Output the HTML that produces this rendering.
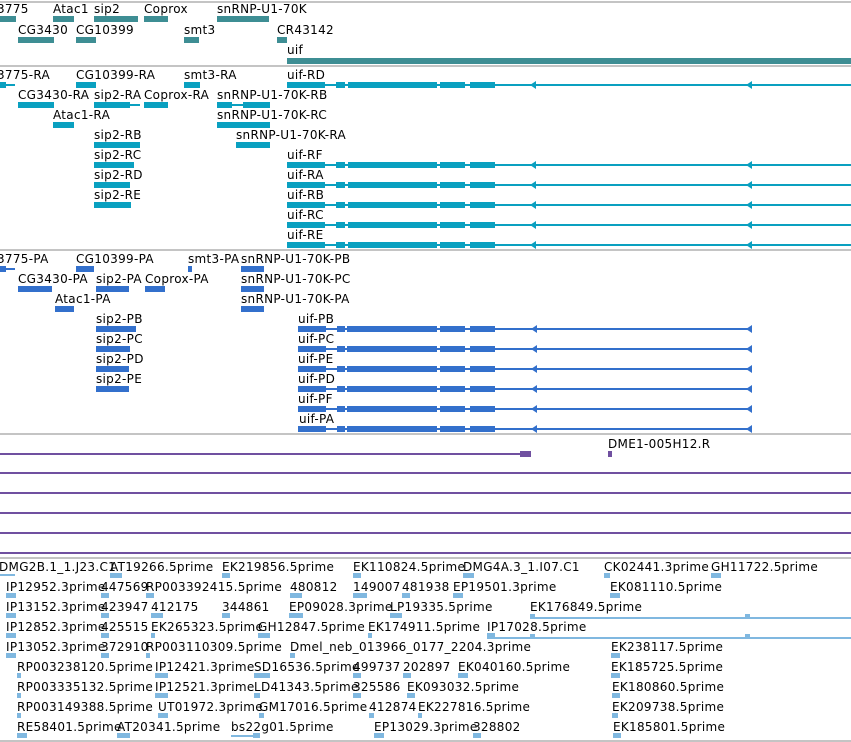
<!DOCTYPE html>
<html><head><meta charset="utf-8"><style>
body{margin:0;width:851px;height:742px;overflow:hidden;background:#fff;position:relative;font-family:"DejaVu Sans","Liberation Sans",sans-serif;font-size:12px;color:#000}
.t{position:absolute;white-space:nowrap;line-height:14px;margin-top:1px;letter-spacing:0.3px}
.b{position:absolute;height:6px}
.g{background:#3e8e94}.r{background:#0aa0c0}.p{background:#3370cc}.e{background:#80b8e0}.v{background:#7050a0}
.l{position:absolute;height:2px}
.s{position:absolute;left:0;width:851px;height:2px;background:#c4c4c4}
.row{position:absolute;left:0;width:851px;height:6px}
.row>div{position:absolute;top:0;height:6px}
.row>.ln{top:2px;height:2px}
.row>.ah{width:0;height:0;top:-1px;border-top:4px solid transparent;border-bottom:4px solid transparent;border-right:6px solid;background:none!important}
.R>div{background:#0aa0c0}.R>.ah{border-right-color:#0aa0c0}
.P>div{background:#3370cc}.P>.ah{border-right-color:#3370cc}
</style></head><body>
<div class="s" style="top:1px"></div>
<div class="s" style="top:65px"></div>
<div class="s" style="top:249px"></div>
<div class="s" style="top:433px"></div>
<div class="s" style="top:557px"></div>
<div class="s" style="top:740px"></div>

<!-- genes -->
<div class="t" style="left:-3px;top:1px">3775</div><div class="t" style="left:53px;top:1px">Atac1</div><div class="t" style="left:94px;top:1px">sip2</div><div class="t" style="left:144px;top:1px">Coprox</div><div class="t" style="left:217px;top:1px">snRNP-U1-70K</div>
<div class="b g" style="left:0;top:16px;width:16px"></div><div class="b g" style="left:53px;top:16px;width:21px"></div><div class="b g" style="left:94px;top:16px;width:44px"></div><div class="b g" style="left:144px;top:16px;width:24px"></div><div class="b g" style="left:217px;top:16px;width:52px"></div>
<div class="t" style="left:18px;top:22px">CG3430</div><div class="t" style="left:76px;top:22px">CG10399</div><div class="t" style="left:184px;top:22px">smt3</div><div class="t" style="left:277px;top:22px">CR43142</div>
<div class="b g" style="left:18px;top:37px;width:36px"></div><div class="b g" style="left:76px;top:37px;width:20px"></div><div class="b g" style="left:184px;top:37px;width:15px"></div><div class="b g" style="left:277px;top:37px;width:10px"></div>
<div class="t" style="left:287px;top:42px">uif</div>
<div class="b g" style="left:287px;top:58px;width:564px"></div>

<!-- transcripts -->
<div class="t" style="left:-3px;top:67px">3775-RA</div><div class="t" style="left:76px;top:67px">CG10399-RA</div><div class="t" style="left:184px;top:67px">smt3-RA</div><div class="t" style="left:287px;top:67px">uif-RD</div>
<div class="b r" style="left:0;top:82px;width:6px"></div><div class="l r" style="left:0;top:84px;width:15px"></div><div class="b r" style="left:76px;top:82px;width:20px"></div><div class="b r" style="left:184px;top:82px;width:16px"></div>
<div class="t" style="left:18px;top:87px">CG3430-RA</div><div class="t" style="left:94px;top:87px">sip2-RA</div><div class="t" style="left:144px;top:87px">Coprox-RA</div><div class="t" style="left:217px;top:87px">snRNP-U1-70K-RB</div>
<div class="b r" style="left:18px;top:102px;width:36px"></div><div class="b r" style="left:94px;top:102px;width:36px"></div><div class="l r" style="left:94px;top:104px;width:46px"></div><div class="b r" style="left:144px;top:102px;width:24px"></div><div class="b r" style="left:217px;top:102px;width:15px"></div><div class="l r" style="left:217px;top:104px;width:50px"></div><div class="b r" style="left:243px;top:102px;width:27px"></div>
<div class="t" style="left:53px;top:107px">Atac1-RA</div><div class="t" style="left:217px;top:107px">snRNP-U1-70K-RC</div>
<div class="b r" style="left:53px;top:122px;width:21px"></div><div class="b r" style="left:217px;top:122px;width:53px"></div>
<div class="t" style="left:94px;top:127px">sip2-RB</div><div class="t" style="left:236px;top:127px">snRNP-U1-70K-RA</div>
<div class="b r" style="left:94px;top:142px;width:46px"></div><div class="b r" style="left:236px;top:142px;width:34px"></div>
<div class="t" style="left:94px;top:147px">sip2-RC</div><div class="t" style="left:287px;top:147px">uif-RF</div>
<div class="b r" style="left:94px;top:162px;width:40px"></div>
<div class="t" style="left:94px;top:167px">sip2-RD</div><div class="t" style="left:287px;top:167px">uif-RA</div>
<div class="b r" style="left:94px;top:182px;width:36px"></div>
<div class="t" style="left:94px;top:187px">sip2-RE</div><div class="t" style="left:287px;top:187px">uif-RB</div>
<div class="b r" style="left:94px;top:202px;width:37px"></div>
<div class="t" style="left:287px;top:207px">uif-RC</div>
<div class="t" style="left:287px;top:227px">uif-RE</div>

<div class="row R" style="top:82px"><div class="ln" style="left:287px;width:564px"></div><div style="left:287px;width:38px"></div><div style="left:336px;width:9px"></div><div style="left:348px;width:89px"></div><div style="left:440px;width:25px"></div><div style="left:470px;width:25px"></div><div class="ah" style="left:530px"></div><div class="ah" style="left:746px"></div></div>
<div class="row R" style="top:162px"><div class="ln" style="left:287px;width:564px"></div><div style="left:287px;width:38px"></div><div style="left:336px;width:9px"></div><div style="left:348px;width:89px"></div><div style="left:440px;width:25px"></div><div style="left:470px;width:25px"></div><div class="ah" style="left:530px"></div><div class="ah" style="left:746px"></div></div>
<div class="row R" style="top:182px"><div class="ln" style="left:287px;width:564px"></div><div style="left:287px;width:38px"></div><div style="left:336px;width:9px"></div><div style="left:348px;width:89px"></div><div style="left:440px;width:25px"></div><div style="left:470px;width:25px"></div><div class="ah" style="left:530px"></div><div class="ah" style="left:746px"></div></div>
<div class="row R" style="top:202px"><div class="ln" style="left:287px;width:564px"></div><div style="left:287px;width:38px"></div><div style="left:336px;width:9px"></div><div style="left:348px;width:89px"></div><div style="left:440px;width:25px"></div><div style="left:470px;width:25px"></div><div class="ah" style="left:530px"></div><div class="ah" style="left:746px"></div></div>
<div class="row R" style="top:222px"><div class="ln" style="left:287px;width:564px"></div><div style="left:287px;width:38px"></div><div style="left:336px;width:9px"></div><div style="left:348px;width:89px"></div><div style="left:440px;width:25px"></div><div style="left:470px;width:25px"></div><div class="ah" style="left:530px"></div><div class="ah" style="left:746px"></div></div>
<div class="row R" style="top:242px"><div class="ln" style="left:287px;width:564px"></div><div style="left:287px;width:38px"></div><div style="left:336px;width:9px"></div><div style="left:348px;width:89px"></div><div style="left:440px;width:25px"></div><div style="left:470px;width:25px"></div><div class="ah" style="left:530px"></div><div class="ah" style="left:746px"></div></div>

<!-- proteins -->
<div class="t" style="left:-3px;top:251px">3775-PA</div><div class="t" style="left:76px;top:251px">CG10399-PA</div><div class="t" style="left:188px;top:251px">smt3-PA</div><div class="t" style="left:241px;top:251px">snRNP-U1-70K-PB</div>
<div class="b p" style="left:0;top:266px;width:6px"></div><div class="l p" style="left:0;top:268px;width:15px"></div><div class="b p" style="left:76px;top:266px;width:18px"></div><div class="b p" style="left:188px;top:266px;width:4px"></div><div class="b p" style="left:241px;top:266px;width:23px"></div>
<div class="t" style="left:18px;top:271px">CG3430-PA</div><div class="t" style="left:96px;top:271px">sip2-PA</div><div class="t" style="left:145px;top:271px">Coprox-PA</div><div class="t" style="left:241px;top:271px">snRNP-U1-70K-PC</div>
<div class="b p" style="left:18px;top:286px;width:34px"></div><div class="b p" style="left:96px;top:286px;width:33px"></div><div class="b p" style="left:145px;top:286px;width:20px"></div><div class="b p" style="left:241px;top:286px;width:23px"></div>
<div class="t" style="left:55px;top:291px">Atac1-PA</div><div class="t" style="left:241px;top:291px">snRNP-U1-70K-PA</div>
<div class="b p" style="left:55px;top:306px;width:19px"></div><div class="b p" style="left:241px;top:306px;width:23px"></div>
<div class="t" style="left:96px;top:311px">sip2-PB</div><div class="t" style="left:298px;top:311px">uif-PB</div>
<div class="b p" style="left:96px;top:326px;width:40px"></div>
<div class="t" style="left:96px;top:331px">sip2-PC</div><div class="t" style="left:298px;top:331px">uif-PC</div>
<div class="b p" style="left:96px;top:346px;width:34px"></div>
<div class="t" style="left:96px;top:351px">sip2-PD</div><div class="t" style="left:298px;top:351px">uif-PE</div>
<div class="b p" style="left:96px;top:366px;width:33px"></div>
<div class="t" style="left:96px;top:371px">sip2-PE</div><div class="t" style="left:298px;top:371px">uif-PD</div>
<div class="b p" style="left:96px;top:386px;width:33px"></div>
<div class="t" style="left:298px;top:391px">uif-PF</div>
<div class="t" style="left:299px;top:411px">uif-PA</div>

<div class="row P" style="top:326px"><div class="ln" style="left:298px;width:452px"></div><div style="left:298px;width:28px"></div><div style="left:337px;width:8px"></div><div style="left:347px;width:90px"></div><div style="left:440px;width:25px"></div><div style="left:470px;width:25px"></div><div class="ah" style="left:531px"></div><div class="ah" style="left:746px"></div></div>
<div class="row P" style="top:346px"><div class="ln" style="left:298px;width:452px"></div><div style="left:298px;width:28px"></div><div style="left:337px;width:8px"></div><div style="left:347px;width:90px"></div><div style="left:440px;width:25px"></div><div style="left:470px;width:25px"></div><div class="ah" style="left:531px"></div><div class="ah" style="left:746px"></div></div>
<div class="row P" style="top:366px"><div class="ln" style="left:298px;width:452px"></div><div style="left:298px;width:28px"></div><div style="left:337px;width:8px"></div><div style="left:347px;width:90px"></div><div style="left:440px;width:25px"></div><div style="left:470px;width:25px"></div><div class="ah" style="left:531px"></div><div class="ah" style="left:746px"></div></div>
<div class="row P" style="top:386px"><div class="ln" style="left:298px;width:452px"></div><div style="left:298px;width:28px"></div><div style="left:337px;width:8px"></div><div style="left:347px;width:90px"></div><div style="left:440px;width:25px"></div><div style="left:470px;width:25px"></div><div class="ah" style="left:531px"></div><div class="ah" style="left:746px"></div></div>
<div class="row P" style="top:406px"><div class="ln" style="left:298px;width:452px"></div><div style="left:298px;width:28px"></div><div style="left:337px;width:8px"></div><div style="left:347px;width:90px"></div><div style="left:440px;width:25px"></div><div style="left:470px;width:25px"></div><div class="ah" style="left:531px"></div><div class="ah" style="left:746px"></div></div>
<div class="row P" style="top:426px"><div class="ln" style="left:298px;width:452px"></div><div style="left:298px;width:28px"></div><div style="left:337px;width:8px"></div><div style="left:347px;width:90px"></div><div style="left:440px;width:25px"></div><div style="left:470px;width:25px"></div><div class="ah" style="left:531px"></div><div class="ah" style="left:746px"></div></div>

<!-- purple -->
<div class="t" style="left:608px;top:436px">DME1-005H12.R</div>
<div class="l v" style="left:0;top:453px;width:522px"></div><div class="b v" style="left:520px;top:451px;width:11px"></div><div class="b v" style="left:608px;top:451px;width:4px"></div>
<div class="l v" style="left:0;top:472px;width:851px"></div>
<div class="l v" style="left:0;top:492px;width:851px"></div>
<div class="l v" style="left:0;top:512px;width:851px"></div>
<div class="l v" style="left:0;top:532px;width:851px"></div>
<div class="l v" style="left:0;top:552px;width:851px"></div>

<!-- ESTs -->
<div class="t" style="left:-1px;top:559px">DMG2B.1_1.J23.C1</div><div class="t" style="left:110px;top:559px">AT19266.5prime</div><div class="t" style="left:222px;top:559px">EK219856.5prime</div><div class="t" style="left:353px;top:559px">EK110824.5prime</div><div class="t" style="left:463px;top:559px">DMG4A.3_1.I07.C1</div><div class="t" style="left:604px;top:559px">CK02441.3prime</div><div class="t" style="left:711px;top:559px">GH11722.5prime</div>
<div class="b e" style="left:0;top:574px;width:15px;height:2px"></div><div class="b e" style="left:110px;top:573px;width:12px;height:5px"></div><div class="b e" style="left:222px;top:573px;width:8px;height:5px"></div><div class="b e" style="left:353px;top:573px;width:8px;height:5px"></div><div class="b e" style="left:463px;top:573px;width:11px;height:5px"></div><div class="b e" style="left:604px;top:573px;width:6px;height:5px"></div><div class="b e" style="left:711px;top:573px;width:10px;height:5px"></div>

<div class="t" style="left:6px;top:579px">IP12952.3prime</div><div class="t" style="left:101px;top:579px">447569</div><div class="t" style="left:146px;top:579px">RP003392415.5prime</div><div class="t" style="left:290px;top:579px">480812</div><div class="t" style="left:353px;top:579px">149007</div><div class="t" style="left:402px;top:579px">481938</div><div class="t" style="left:453px;top:579px">EP19501.3prime</div><div class="t" style="left:610px;top:579px">EK081110.5prime</div>
<div class="b e" style="left:6px;top:593px;width:10px;height:5px"></div><div class="b e" style="left:101px;top:593px;width:8px;height:5px"></div><div class="b e" style="left:146px;top:593px;width:8px;height:5px"></div><div class="b e" style="left:290px;top:593px;width:12px;height:5px"></div><div class="b e" style="left:353px;top:593px;width:14px;height:5px"></div><div class="b e" style="left:402px;top:593px;width:8px;height:5px"></div><div class="b e" style="left:453px;top:593px;width:10px;height:5px"></div><div class="b e" style="left:610px;top:593px;width:10px;height:5px"></div>

<div class="t" style="left:6px;top:599px">IP13152.3prime</div><div class="t" style="left:101px;top:599px">423947</div><div class="t" style="left:151px;top:599px">412175</div><div class="t" style="left:222px;top:599px">344861</div><div class="t" style="left:289px;top:599px">EP09028.3prime</div><div class="t" style="left:390px;top:599px">LP19335.5prime</div><div class="t" style="left:530px;top:599px">EK176849.5prime</div>
<div class="b e" style="left:6px;top:613px;width:10px;height:5px"></div><div class="b e" style="left:101px;top:613px;width:8px;height:5px"></div><div class="b e" style="left:151px;top:613px;width:12px;height:5px"></div><div class="b e" style="left:222px;top:613px;width:8px;height:5px"></div><div class="b e" style="left:289px;top:613px;width:14px;height:5px"></div><div class="b e" style="left:390px;top:613px;width:12px;height:5px"></div><div class="l e" style="left:530px;top:617px;width:321px"></div><div class="b e" style="left:530px;top:614px;width:5px;height:5px"></div><div class="b e" style="left:745px;top:614px;width:5px;height:5px"></div>

<div class="t" style="left:6px;top:619px">IP12852.3prime</div><div class="t" style="left:101px;top:619px">425515</div><div class="t" style="left:151px;top:619px">EK265323.5prime</div><div class="t" style="left:258px;top:619px">GH12847.5prime</div><div class="t" style="left:368px;top:619px">EK174911.5prime</div><div class="t" style="left:487px;top:619px">IP17028.5prime</div>
<div class="b e" style="left:6px;top:633px;width:10px;height:5px"></div><div class="b e" style="left:101px;top:633px;width:8px;height:5px"></div><div class="b e" style="left:151px;top:633px;width:4px;height:5px"></div><div class="b e" style="left:258px;top:633px;width:12px;height:5px"></div><div class="b e" style="left:368px;top:633px;width:4px;height:5px"></div><div class="b e" style="left:487px;top:633px;width:8px;height:5px"></div><div class="l e" style="left:487px;top:637px;width:364px"></div><div class="b e" style="left:530px;top:634px;width:5px;height:5px"></div><div class="b e" style="left:745px;top:634px;width:5px;height:5px"></div>

<div class="t" style="left:6px;top:639px">IP13052.3prime</div><div class="t" style="left:101px;top:639px">372910</div><div class="t" style="left:146px;top:639px">RP003110309.5prime</div><div class="t" style="left:290px;top:639px">Dmel_neb_013966_0177_2204.3prime</div><div class="t" style="left:611px;top:639px">EK238117.5prime</div>
<div class="b e" style="left:6px;top:653px;width:10px;height:5px"></div><div class="b e" style="left:101px;top:653px;width:8px;height:5px"></div><div class="b e" style="left:146px;top:653px;width:4px;height:5px"></div><div class="b e" style="left:290px;top:653px;width:5px;height:5px"></div><div class="b e" style="left:611px;top:653px;width:9px;height:5px"></div>

<div class="t" style="left:17px;top:659px">RP003238120.5prime</div><div class="t" style="left:155px;top:659px">IP12421.3prime</div><div class="t" style="left:254px;top:659px">SD16536.5prime</div><div class="t" style="left:353px;top:659px">499737</div><div class="t" style="left:403px;top:659px">202897</div><div class="t" style="left:458px;top:659px">EK040160.5prime</div><div class="t" style="left:611px;top:659px">EK185725.5prime</div>
<div class="b e" style="left:17px;top:673px;width:4px;height:5px"></div><div class="b e" style="left:155px;top:673px;width:13px;height:5px"></div><div class="b e" style="left:254px;top:673px;width:16px;height:5px"></div><div class="b e" style="left:353px;top:673px;width:8px;height:5px"></div><div class="b e" style="left:403px;top:673px;width:8px;height:5px"></div><div class="b e" style="left:458px;top:673px;width:10px;height:5px"></div><div class="b e" style="left:611px;top:673px;width:9px;height:5px"></div>

<div class="t" style="left:17px;top:679px">RP003335132.5prime</div><div class="t" style="left:155px;top:679px">IP12521.3prime</div><div class="t" style="left:254px;top:679px">LD41343.5prime</div><div class="t" style="left:353px;top:679px">325586</div><div class="t" style="left:407px;top:679px">EK093032.5prime</div><div class="t" style="left:612px;top:679px">EK180860.5prime</div>
<div class="b e" style="left:17px;top:693px;width:4px;height:5px"></div><div class="b e" style="left:155px;top:693px;width:13px;height:5px"></div><div class="b e" style="left:254px;top:693px;width:6px;height:5px"></div><div class="b e" style="left:353px;top:693px;width:8px;height:5px"></div><div class="b e" style="left:407px;top:693px;width:8px;height:5px"></div><div class="b e" style="left:612px;top:693px;width:8px;height:5px"></div>

<div class="t" style="left:17px;top:699px">RP003149388.5prime</div><div class="t" style="left:158px;top:699px">UT01972.3prime</div><div class="t" style="left:259px;top:699px">GM17016.5prime</div><div class="t" style="left:369px;top:699px">412874</div><div class="t" style="left:418px;top:699px">EK227816.5prime</div><div class="t" style="left:612px;top:699px">EK209738.5prime</div>
<div class="b e" style="left:17px;top:713px;width:4px;height:5px"></div><div class="b e" style="left:158px;top:713px;width:10px;height:5px"></div><div class="b e" style="left:259px;top:713px;width:5px;height:5px"></div><div class="b e" style="left:369px;top:713px;width:5px;height:5px"></div><div class="b e" style="left:418px;top:713px;width:4px;height:5px"></div><div class="b e" style="left:612px;top:713px;width:6px;height:5px"></div>

<div class="t" style="left:17px;top:719px">RE58401.5prime</div><div class="t" style="left:117px;top:719px">AT20341.5prime</div><div class="t" style="left:231px;top:719px">bs22g01.5prime</div><div class="t" style="left:374px;top:719px">EP13029.3prime</div><div class="t" style="left:473px;top:719px">328802</div><div class="t" style="left:613px;top:719px">EK185801.5prime</div>
<div class="b e" style="left:17px;top:733px;width:10px;height:5px"></div><div class="b e" style="left:117px;top:733px;width:13px;height:5px"></div><div class="l e" style="left:231px;top:735px;width:29px"></div><div class="b e" style="left:253px;top:733px;width:7px;height:5px"></div><div class="b e" style="left:374px;top:733px;width:10px;height:5px"></div><div class="b e" style="left:473px;top:733px;width:8px;height:5px"></div><div class="b e" style="left:613px;top:733px;width:8px;height:5px"></div>
</body></html>
